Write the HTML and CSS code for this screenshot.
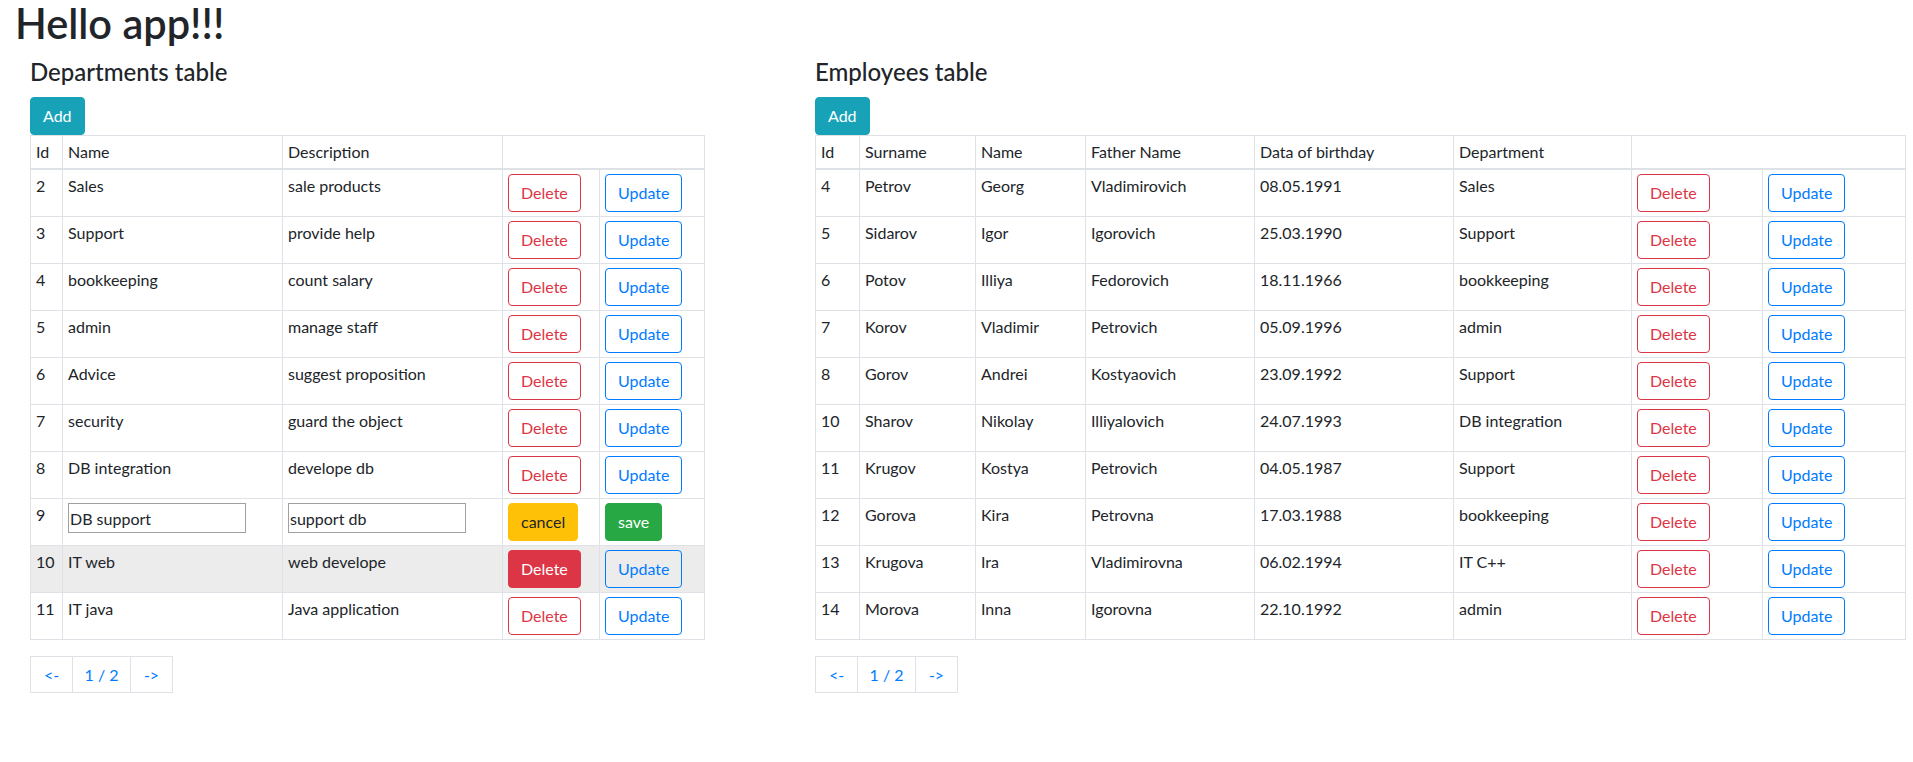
FILE: index.html
```html
<!DOCTYPE html>
<html lang="en">
<head>
<meta charset="utf-8">
<title>Hello app</title>
<link rel="stylesheet" href="styles.css">
</head>
<body>
<div class="page">
  <h1 class="title">Hello app!!!</h1>
  <div class="tables">
    <section class="panel panel-dep">
      <h4 class="panel-title">Departments table</h4>
      <button class="btn btn-info">Add</button>
      <table class="grid">
        <colgroup>
          <col style="width:32px"><col style="width:220px"><col style="width:220px"><col style="width:97px"><col style="width:105px">
        </colgroup>
        <thead>
          <tr><th>Id</th><th>Name</th><th>Description</th><th colspan="2"></th></tr>
        </thead>
        <tbody>
          <tr><td>2</td><td>Sales</td><td>sale products</td><td><button class="btn btn-outline-danger">Delete</button></td><td><button class="btn btn-outline-primary">Update</button></td></tr>
          <tr><td>3</td><td>Support</td><td>provide help</td><td><button class="btn btn-outline-danger">Delete</button></td><td><button class="btn btn-outline-primary">Update</button></td></tr>
          <tr><td>4</td><td>bookkeeping</td><td>count salary</td><td><button class="btn btn-outline-danger">Delete</button></td><td><button class="btn btn-outline-primary">Update</button></td></tr>
          <tr><td>5</td><td>admin</td><td>manage staff</td><td><button class="btn btn-outline-danger">Delete</button></td><td><button class="btn btn-outline-primary">Update</button></td></tr>
          <tr><td>6</td><td>Advice</td><td>suggest proposition</td><td><button class="btn btn-outline-danger">Delete</button></td><td><button class="btn btn-outline-primary">Update</button></td></tr>
          <tr><td>7</td><td>security</td><td>guard the object</td><td><button class="btn btn-outline-danger">Delete</button></td><td><button class="btn btn-outline-primary">Update</button></td></tr>
          <tr><td>8</td><td>DB integration</td><td>develope db</td><td><button class="btn btn-outline-danger">Delete</button></td><td><button class="btn btn-outline-primary">Update</button></td></tr>
          <tr><td>9</td><td><input class="edit-input" type="text" value="DB support"></td><td><input class="edit-input" type="text" value="support db"></td><td><button class="btn btn-warning">cancel</button></td><td><button class="btn btn-success">save</button></td></tr>
          <tr class="is-hover"><td>10</td><td>IT web</td><td>web develope</td><td><button class="btn btn-outline-danger is-active">Delete</button></td><td><button class="btn btn-outline-primary">Update</button></td></tr>
          <tr><td>11</td><td>IT java</td><td>Java application</td><td><button class="btn btn-outline-danger">Delete</button></td><td><button class="btn btn-outline-primary">Update</button></td></tr>
        </tbody>
      </table>
      <ul class="pager">
        <li class="pager-item pager-side">&lt;-</li>
        <li class="pager-item pager-mid">1 / 2</li>
        <li class="pager-item pager-side">-&gt;</li>
      </ul>
    </section>

    <section class="panel panel-emp">
      <h4 class="panel-title">Employees table</h4>
      <button class="btn btn-info">Add</button>
      <table class="grid">
        <colgroup>
          <col style="width:44px"><col style="width:116px"><col style="width:110px"><col style="width:169px"><col style="width:199px"><col style="width:178px"><col style="width:131px"><col style="width:143px">
        </colgroup>
        <thead>
          <tr><th>Id</th><th>Surname</th><th>Name</th><th>Father Name</th><th>Data of birthday</th><th>Department</th><th colspan="2"></th></tr>
        </thead>
        <tbody>
          <tr><td>4</td><td>Petrov</td><td>Georg</td><td>Vladimirovich</td><td>08.05.1991</td><td>Sales</td><td><button class="btn btn-outline-danger">Delete</button></td><td><button class="btn btn-outline-primary">Update</button></td></tr>
          <tr><td>5</td><td>Sidarov</td><td>Igor</td><td>Igorovich</td><td>25.03.1990</td><td>Support</td><td><button class="btn btn-outline-danger">Delete</button></td><td><button class="btn btn-outline-primary">Update</button></td></tr>
          <tr><td>6</td><td>Potov</td><td>Illiya</td><td>Fedorovich</td><td>18.11.1966</td><td>bookkeeping</td><td><button class="btn btn-outline-danger">Delete</button></td><td><button class="btn btn-outline-primary">Update</button></td></tr>
          <tr><td>7</td><td>Korov</td><td>Vladimir</td><td>Petrovich</td><td>05.09.1996</td><td>admin</td><td><button class="btn btn-outline-danger">Delete</button></td><td><button class="btn btn-outline-primary">Update</button></td></tr>
          <tr><td>8</td><td>Gorov</td><td>Andrei</td><td>Kostyaovich</td><td>23.09.1992</td><td>Support</td><td><button class="btn btn-outline-danger">Delete</button></td><td><button class="btn btn-outline-primary">Update</button></td></tr>
          <tr><td>10</td><td>Sharov</td><td>Nikolay</td><td>Illiyalovich</td><td>24.07.1993</td><td>DB integration</td><td><button class="btn btn-outline-danger">Delete</button></td><td><button class="btn btn-outline-primary">Update</button></td></tr>
          <tr><td>11</td><td>Krugov</td><td>Kostya</td><td>Petrovich</td><td>04.05.1987</td><td>Support</td><td><button class="btn btn-outline-danger">Delete</button></td><td><button class="btn btn-outline-primary">Update</button></td></tr>
          <tr><td>12</td><td>Gorova</td><td>Kira</td><td>Petrovna</td><td>17.03.1988</td><td>bookkeeping</td><td><button class="btn btn-outline-danger">Delete</button></td><td><button class="btn btn-outline-primary">Update</button></td></tr>
          <tr><td>13</td><td>Krugova</td><td>Ira</td><td>Vladimirovna</td><td>06.02.1994</td><td>IT C++</td><td><button class="btn btn-outline-danger">Delete</button></td><td><button class="btn btn-outline-primary">Update</button></td></tr>
          <tr><td>14</td><td>Morova</td><td>Inna</td><td>Igorovna</td><td>22.10.1992</td><td>admin</td><td><button class="btn btn-outline-danger">Delete</button></td><td><button class="btn btn-outline-primary">Update</button></td></tr>
        </tbody>
      </table>
      <ul class="pager">
        <li class="pager-item pager-side">&lt;-</li>
        <li class="pager-item pager-mid">1 / 2</li>
        <li class="pager-item pager-side">-&gt;</li>
      </ul>
    </section>
  </div>
</div>
</body>
</html>
```

FILE: styles.css
```css
* { box-sizing: border-box; }

body {
  margin: 0;
  font-family: "Lato", "Open Sans", "Liberation Sans", sans-serif;
  font-size: 16px;
  line-height: 24px;
  color: #212529;
  background: #fff;
}

.page {
  padding: 0 15px;
}

.title {
  margin: 0;
  font-size: 41.5px;
  line-height: 46px;
  font-weight: 600;
}

.tables {
  display: flex;
  align-items: flex-start;
  padding-left: 15px;
}

.panel-dep { width: 674px; }
.panel-emp { width: 1090px; margin-left: 111px; }

.panel-title {
  margin: 11px 0 11px;
  font-size: 24px;
  line-height: 29px;
  font-weight: 500;
}

.btn {
  display: inline-block;
  vertical-align: top;
  font-family: inherit;
  font-size: 16px;
  line-height: 24px;
  font-weight: 400;
  padding: 6px 12px;
  border: 1px solid transparent;
  border-radius: 4px;
  background: transparent;
  cursor: pointer;
}

.btn-info { background: #17a2b8; border-color: #17a2b8; color: #fff; }
.btn-outline-danger { color: #dc3545; border-color: #dc3545; }
.btn-outline-danger.is-active { background: #dc3545; color: #fff; }
.btn-outline-primary { color: #007bff; border-color: #007bff; }
.btn-warning { background: #ffc107; border-color: #ffc107; color: #212529; }
.btn-success { background: #28a745; border-color: #28a745; color: #fff; }

.grid {
  display: table;
  width: 100%;
  table-layout: fixed;
  border-collapse: collapse;
  border: 1px solid #dee2e6;
  margin-bottom: 16px;
}

.grid th,
.grid td {
  border: 1px solid #dee2e6;
  padding: 4px 5px;
  text-align: left;
  vertical-align: top;
  font-weight: 400;
  white-space: nowrap;
}

.grid thead th {
  vertical-align: bottom;
  border-bottom-width: 2px;
}

.grid tr.is-hover td { background: #ececec; }

.edit-input {
  display: inline-block;
  vertical-align: top;
  width: 178px;
  height: 30px;
  padding: 1px 1px;
  border: 1px solid #a0a0a0;
  font-family: inherit;
  font-size: 16px;
  line-height: 24px;
  color: #212529;
  background: #fff;
}

.pager {
  display: flex;
  margin: 0;
  padding: 0;
  list-style: none;
}

.pager-item {
  height: 37px;
  line-height: 20px;
  padding: 8px 0;
  text-align: center;
  color: #007bff;
  border: 1px solid #dee2e6;
}

.pager-item + .pager-item { margin-left: -1px; }
.pager-side { width: 43px; }
.pager-mid { width: 59px; }
```
